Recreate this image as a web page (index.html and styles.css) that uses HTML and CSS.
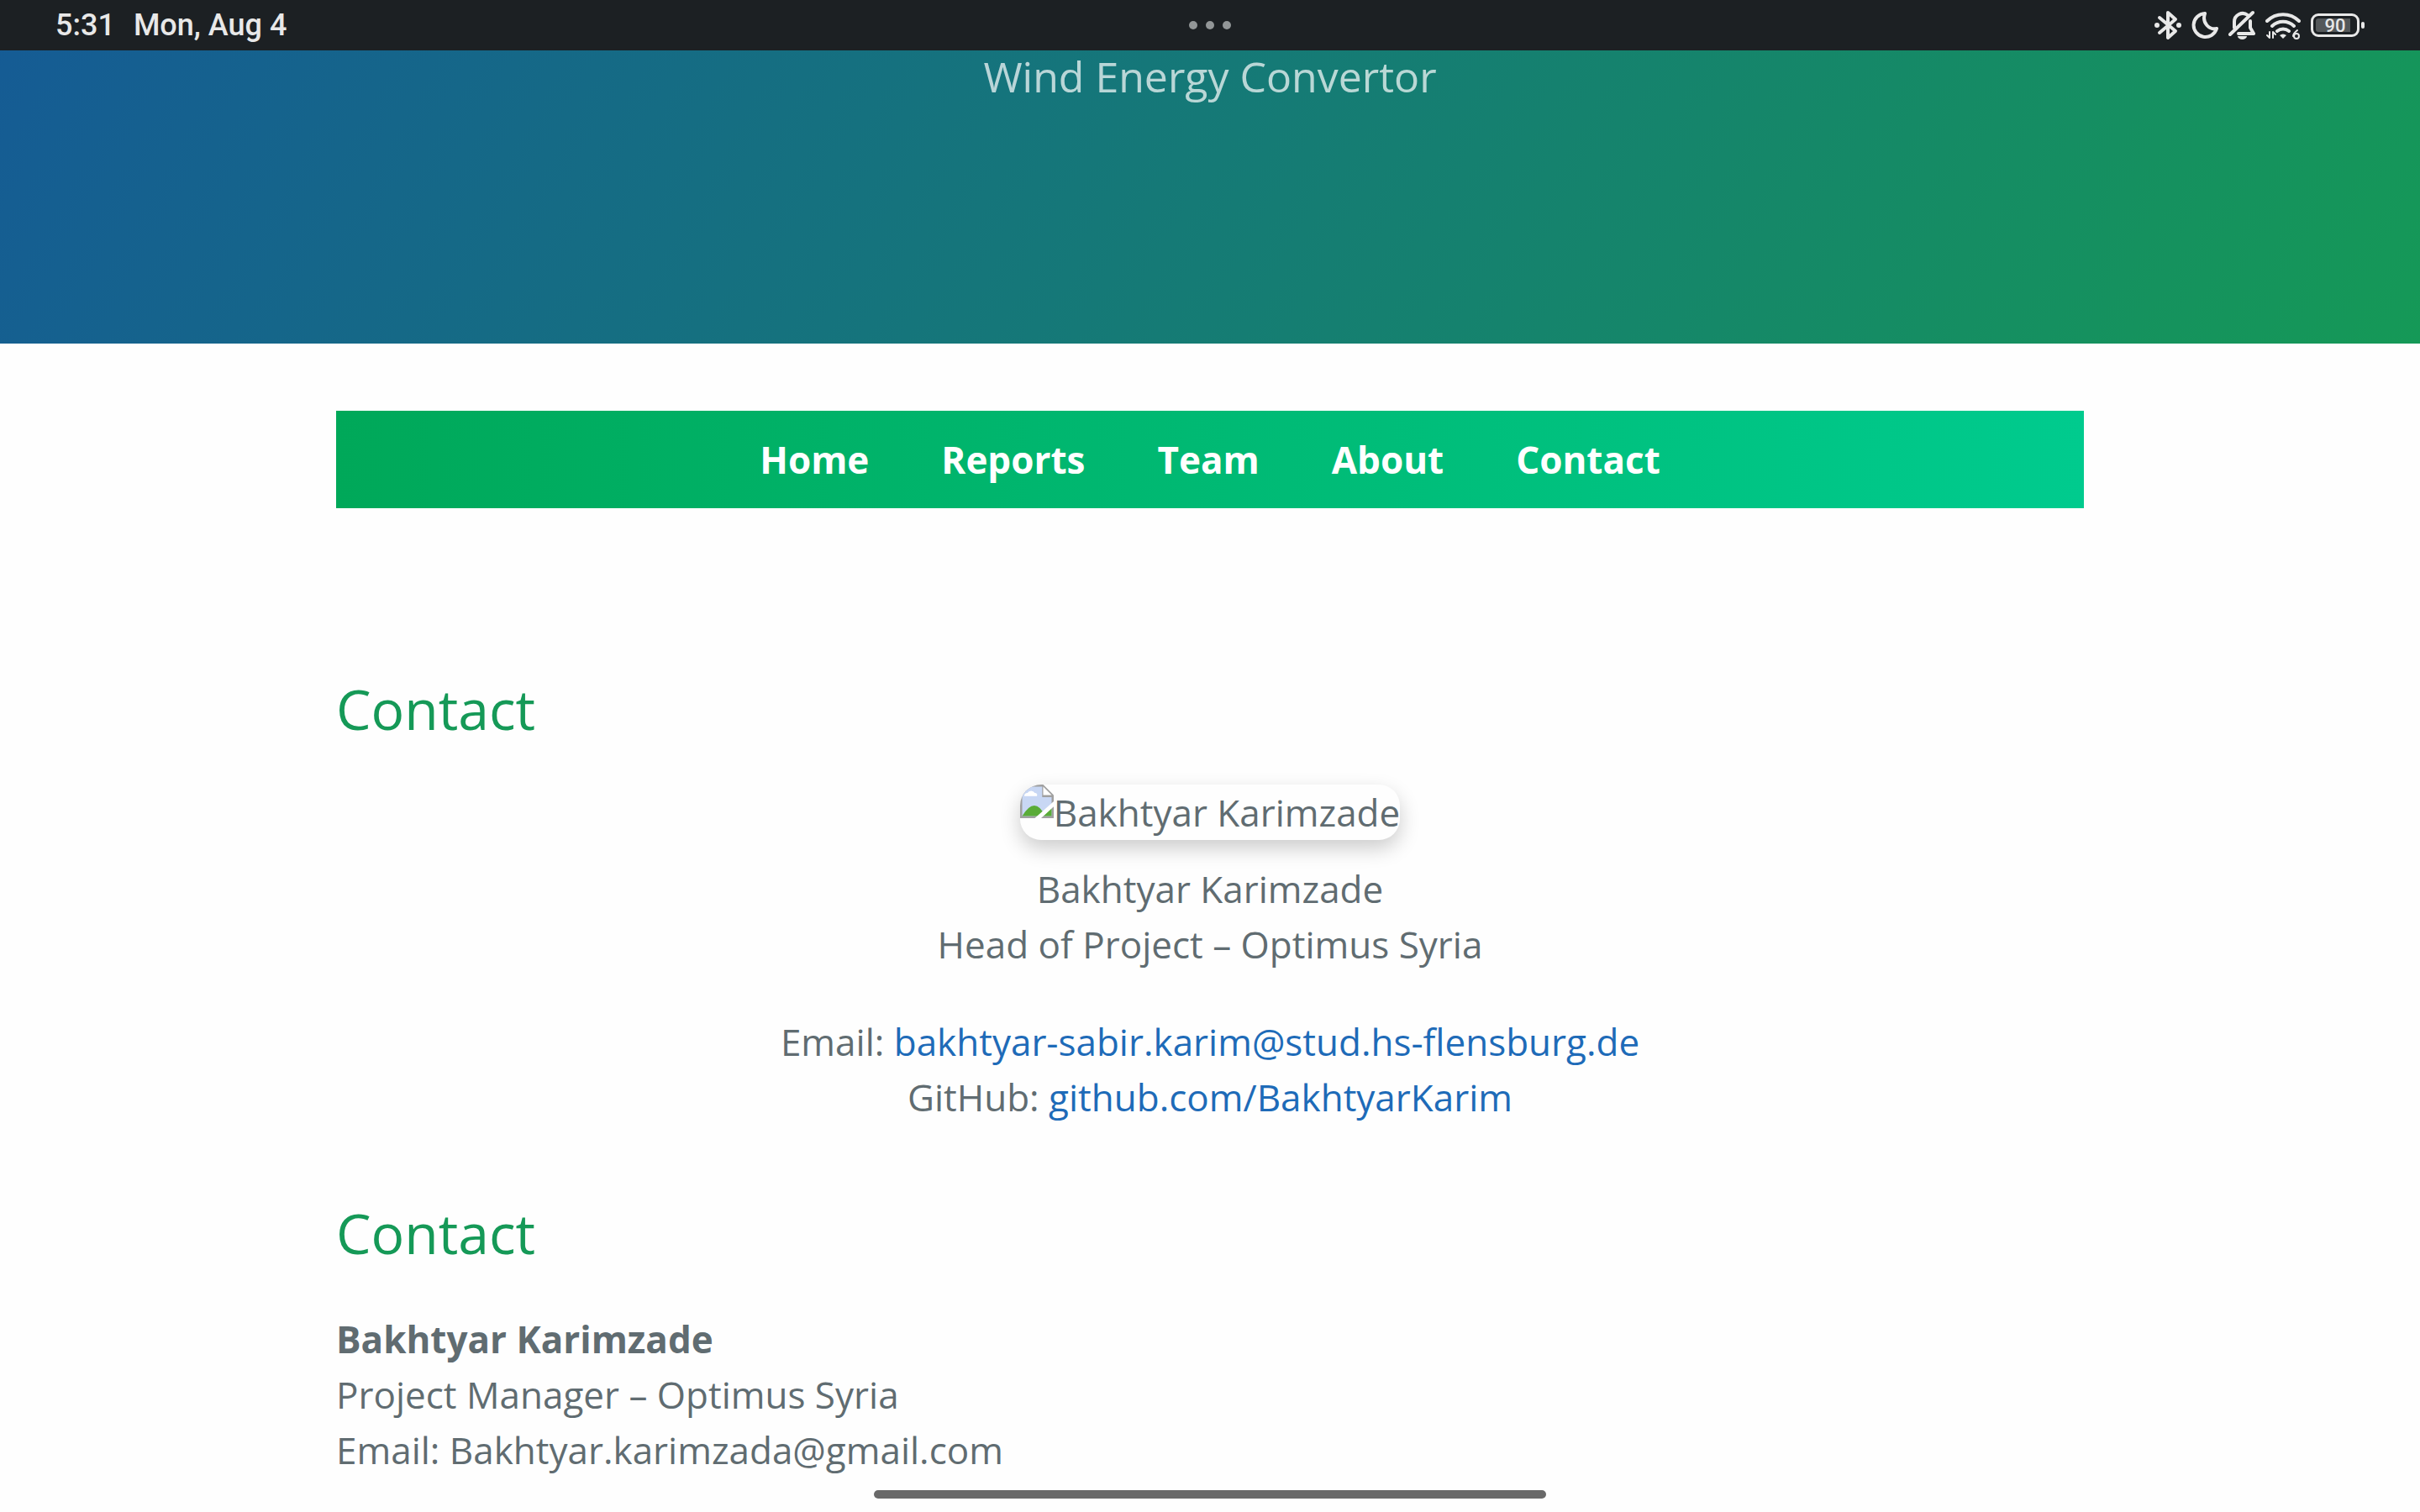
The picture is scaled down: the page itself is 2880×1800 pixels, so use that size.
FILE: index.html
```html
<!DOCTYPE html>
<html lang="en">
<head>
<meta charset="utf-8">
<meta name="viewport" content="width=device-width, initial-scale=1">
<title>Wind Energy Convertor</title>
<link rel="stylesheet" href="styles.css">
</head>
<body>
<div class="status-bar">
  <div class="status-time"><span>5:31</span><span>Mon, Aug 4</span></div>
  <svg class="status-dots" viewBox="0 0 52 12" aria-hidden="true"><circle cx="6" cy="6" r="5"/><circle cx="26" cy="6" r="5"/><circle cx="46" cy="6" r="5"/></svg>
  <div class="status-icons">
    <svg class="icon-bluetooth" viewBox="0 0 32 36" aria-hidden="true"><path d="M6 9l19 16-9 8V3l9 8L6 27"/><circle cx="3" cy="18" r="3" class="solid"/><circle cx="29" cy="18" r="3" class="solid"/></svg>
    <svg class="icon-moon" viewBox="0 0 32 36" aria-hidden="true"><path d="M16 4A14 14 0 1 0 30 22C22 24 12 16 16 4z"/></svg>
    <svg class="icon-bell" viewBox="0 0 32 36" aria-hidden="true"><path d="M7 21V14a10 10 0 0 1 16-8M26 13v8l4 7H12M2 29L29 3"/><path d="M11 31h11a5.5 4 0 0 1-11 0z" class="solid"/></svg>
    <svg class="icon-wifi" viewBox="0 0 42 36" aria-hidden="true"><path d="M2 13a27 27 0 0 1 38 0M8 19a19 19 0 0 1 26 0M14 25a11 11 0 0 1 14 0"/><path d="M17 30q4-3 8 0l-4 4z" class="solid"/><path d="M5 26v7l-3-3M9 33v-7l3 3" class="thin"/><path d="M38 24q-5 4-5 7" class="thin"/><circle cx="37" cy="31" r="3" class="thin"/></svg>
    <div class="battery"><span class="battery-level">90</span></div>
  </div>
</div>

<header class="page-header">
  <h2 class="tagline">Wind Energy Convertor</h2>
</header>

<main class="content">
  <nav class="site-nav">
    <a href="#home">Home</a>
    <a href="#reports">Reports</a>
    <a href="#team">Team</a>
    <a href="#about">About</a>
    <a href="#contact">Contact</a>
  </nav>

  <section class="profile" id="contact">
    <h2>Contact</h2>
    <div class="portrait">
      <svg viewBox="0 0 16 16" aria-hidden="true">
        <path d="M0 0h11l5 5v11H0z" fill="#a0a0a0"/>
        <path d="M1 1h9.500v5H15v9H1z" fill="#c8d7f4"/>
        <path d="M11 1l4 4h-4z" fill="#fff"/>
        <path d="M2 5.500a1.500 1.500 0 0 1 1.500-1.500 2 2 0 0 1 3.500 0 1 1 0 0 1 1 1.500z" fill="#fff"/>
        <path d="M1 15q6-10 11 0zM11 15l4-4v4z" fill="#5aac38"/>
        <path d="M7 16l9-8v2.500l-6 5.500z" fill="#fff"/>
      </svg>
      <span>Bakhtyar Karimzade</span>
    </div>
    <p class="role">Bakhtyar Karimzade<br>Head of Project – Optimus Syria</p>
    <p class="links">Email: <a href="mailto:bakhtyar-sabir.karim@stud.hs-flensburg.de">bakhtyar-sabir.karim@stud.hs-flensburg.de</a><br>
    GitHub: <a href="https://github.com/BakhtyarKarim">github.com/BakhtyarKarim</a></p>
  </section>

  <section class="details">
    <h2>Contact</h2>
    <p><strong>Bakhtyar Karimzade</strong><br>Project Manager – Optimus Syria<br>Email: Bakhtyar.karimzada@gmail.com</p>
  </section>
</main>
<div class="home-indicator"></div>
</body>
</html>
```
FILE: styles.css
```css
* { box-sizing: border-box; }

body {
  margin: 0;
  background: #fefefe;
  color: #606c71;
  font: 44px/66px "Open Sans", "Noto Sans", sans-serif;
}

h2, p { margin: 0; }

a { color: #1e6bb8; text-decoration: none; }

.status-bar {
  display: grid;
  grid-template-columns: 1fr auto 1fr;
  align-items: center;
  height: 60px;
  padding: 0 66px;
  background: #1c2023;
  color: #e8e8e8;
  font: 500 36px/60px Roboto, sans-serif;
}

.status-time { display: flex; gap: 22px; }

.status-dots { width: 52px; height: 12px; fill: #929697; }

.status-icons {
  display: flex;
  align-items: center;
  justify-content: flex-end;
  gap: 12px;
}

.status-icons svg {
  width: 32px;
  height: 36px;
  fill: none;
  stroke: #e8e8e8;
  stroke-width: 4;
  stroke-linecap: round;
  stroke-linejoin: round;
}

.status-icons .icon-wifi { width: 42px; }
.status-icons .solid { fill: #e8e8e8; stroke: none; }
.status-icons .thin { stroke-width: 2; }

.battery {
  position: relative;
  width: 58px;
  height: 28px;
  margin-right: 6px;
  padding: 3px;
  border: 3px solid #e8e8e8;
  border-radius: 9px;
}

.battery::after {
  content: "";
  position: absolute;
  top: 7px;
  right: -9px;
  width: 4px;
  height: 8px;
  border-radius: 2px;
  background: #e8e8e8;
}

.battery-level {
  display: block;
  height: 16px;
  border-radius: 3px;
  background: linear-gradient(90deg, #54585a 90%, transparent 90%);
  font-size: 22px;
  line-height: 17px;
  text-align: center;
}

.page-header {
  padding-bottom: 287px;
  background: linear-gradient(120deg, #155799, #159957) bottom / 100% 754px;
  color: #fff;
  text-align: center;
}

.tagline {
  font-size: 50px;
  font-weight: 400;
  line-height: 62px;
  opacity: 0.7;
}

.content {
  max-width: 2560px;
  margin: 0 auto;
  padding: 80px 240px;
}

.site-nav {
  display: flex;
  justify-content: center;
  gap: 86px;
  padding: 25px;
  background: linear-gradient(90deg, #00a859, #00cb8e);
  font-weight: 700;
}

.site-nav a { color: #fff; }

.content h2 {
  color: #159957;
  font-size: 66px;
  font-weight: 400;
  line-height: 100px;
}

.profile {
  display: flex;
  flex-direction: column;
  margin-top: 188px;
  text-align: center;
}

.profile h2 { text-align: left; }

.portrait {
  display: flex;
  align-self: center;
  margin-top: 41px;
  overflow: hidden;
  border-radius: 25px;
  box-shadow: 0 10px 25px rgba(0, 0, 0, 0.2);
}

.portrait svg { width: 40px; height: 40px; }

.role { margin-top: 25px; }
.links { margin-top: 50px; }

.details { margin-top: 78px; }
.details p { margin-top: 44px; }

.home-indicator {
  position: fixed;
  bottom: 16px;
  left: 50%;
  width: 800px;
  height: 10px;
  margin-left: -400px;
  border-radius: 5px;
  background: #696969;
}
```
